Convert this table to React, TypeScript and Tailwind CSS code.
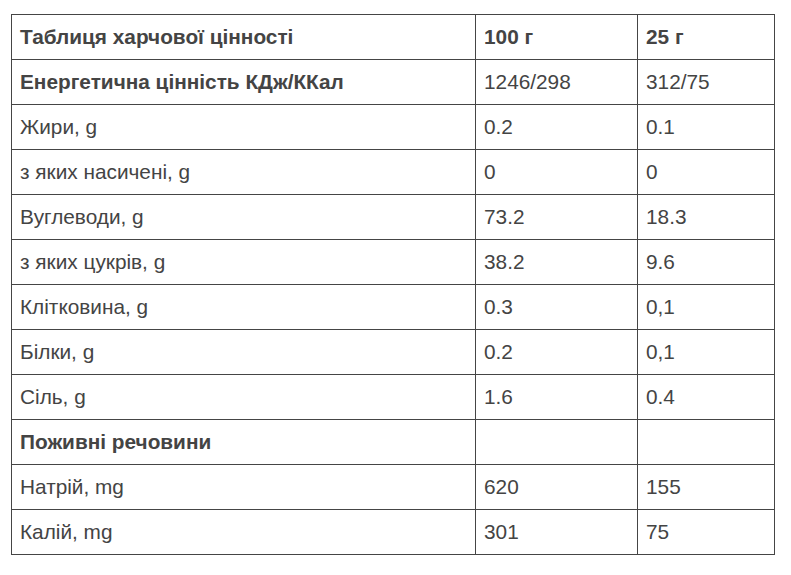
import React from "react";

const rows: { label: string; a: string; b: string; bold?: boolean }[] = [
  { label: "Енергетична цінність КДж/ККал", a: "1246/298", b: "312/75", bold: true },
  { label: "Жири, g", a: "0.2", b: "0.1" },
  { label: "з яких насичені, g", a: "0", b: "0" },
  { label: "Вуглеводи, g", a: "73.2", b: "18.3" },
  { label: "з яких цукрів, g", a: "38.2", b: "9.6" },
  { label: "Клітковина, g", a: "0.3", b: "0,1" },
  { label: "Білки, g", a: "0.2", b: "0,1" },
  { label: "Сіль, g", a: "1.6", b: "0.4" },
  { label: "Поживні речовини", a: "", b: "", bold: true },
  { label: "Натрій, mg", a: "620", b: "155" },
  { label: "Калій, mg", a: "301", b: "75" },
];

const td = "border border-[#454545] h-[45px] px-[8px] py-0 align-middle leading-none";

export default function App() {
  return (
    <div className="bg-white min-h-[575px] pt-[14px] pl-[11px] text-[#444] text-[20.8px]" style={{ fontFamily: '"Liberation Sans", Arial, sans-serif' }}>
      <table className="border-collapse w-[763px] table-fixed">
        <colgroup>
          <col className="w-[464px]" />
          <col className="w-[162px]" />
          <col className="w-[137px]" />
        </colgroup>
        <tbody>
          <tr className="font-bold">
            <td className={td}>Таблиця харчової цінності</td>
            <td className={td}>100 г</td>
            <td className={td}>25 г</td>
          </tr>
          {rows.map((r, i) => (
            <tr key={i}>
              <td className={`${td} ${r.bold ? "font-bold" : ""}`}>{r.label}</td>
              <td className={td}>{r.a}</td>
              <td className={td}>{r.b}</td>
            </tr>
          ))}
        </tbody>
      </table>
    </div>
  );
}
